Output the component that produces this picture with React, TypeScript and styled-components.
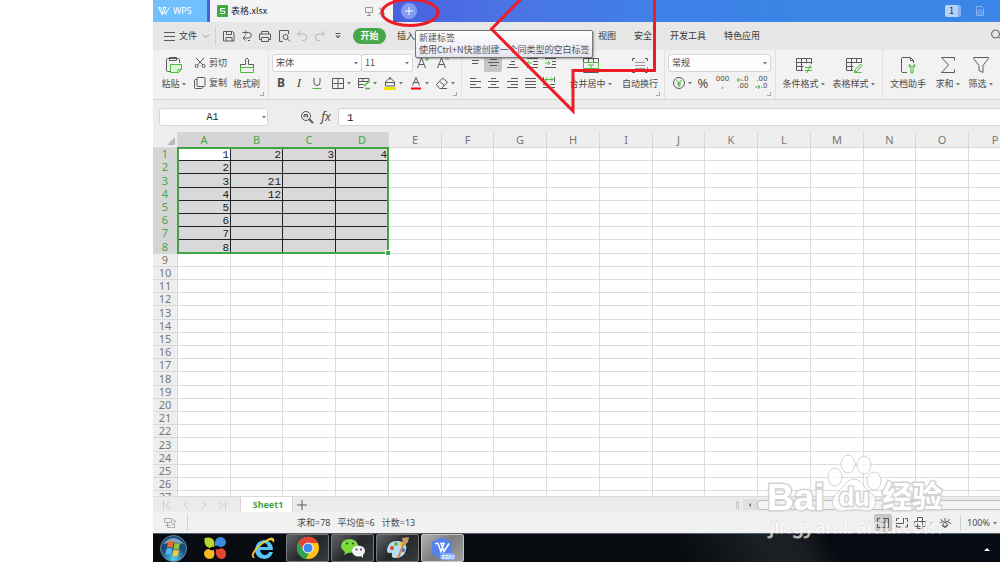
import React from "react";
import styled, { createGlobalStyle } from "styled-components";

const GlobalStyle = createGlobalStyle`
  * { box-sizing: border-box; }
  body { margin: 0; background: #fff; overflow: hidden; }
  button, input, select { font: inherit; color: inherit; margin: 0; }
  svg { flex: none; }
`;

const ui = `"Noto Sans CJK SC", "Noto Sans", sans-serif`;
const mono = `"Liberation Mono", "Noto Sans CJK SC", monospace`;

const Page = styled.div`
  position: relative;
  height: 100vh;
  padding-left: 153px;
  overflow: hidden;
  font: 9px/12px ${ui};
  color: #4c4c4c;
`;
const Desktop = styled.div`
  display: flex;
  flex-direction: column;
  height: 100%;
  min-width: 0;
  background: #f1f1f1;
  overflow: hidden;
`;

/* Title bar */
const TitleBar = styled.header`
  display: flex;
  flex: none;
  align-items: center;
  height: 22px;
  background: linear-gradient(90deg, #4a5fe0 27%, #4a74e4 42%, #3f80e6 60%, #3b85e7 75%);
  color: #fff;
`;
const HomeTab = styled.button`
  display: flex;
  align-items: center;
  gap: 3px;
  width: 54px;
  height: 100%;
  padding: 0 0 0 5px;
  border: 0;
  background: #72bffd;
  color: #fff;
  font: 9px/12px "Noto Sans", sans-serif;
`;
const DocTab = styled.div`
  display: flex;
  align-items: center;
  gap: 3px;
  width: 183px;
  height: 100%;
  margin-left: 3px;
  padding: 0 6px 0 7px;
  background: #f3f3f3;
  color: #223;
`;
const DocName = styled.span`
  flex: 1;
`;
const NewTab = styled.button`
  display: grid;
  place-items: center;
  width: 16px;
  height: 16px;
  margin-left: 8px;
  padding: 0;
  border: 0;
  border-radius: 50%;
  background: #829bf0;
`;
const TitleTools = styled.div`
  display: flex;
  flex: none;
  align-items: center;
  gap: 14px;
  width: 55px;
  margin-left: auto;
  overflow: hidden;
`;
const Count = styled.span`
  flex: none;
  width: 16px;
  border-right: 3px solid #85b2f0;
  border-radius: 2px;
  background: #b7d0f6;
  color: #234;
  text-align: center;
`;

/* Menu */
const MenuBar = styled.nav`
  display: flex;
  flex: none;
  align-items: center;
  height: 28px;
  padding-left: 11px;
  background: #e7e7e7;
  color: #3a3a3a;
`;
const Plain = styled.button<{ $w?: number }>`
  display: flex;
  flex: none;
  align-items: center;
  justify-content: center;
  gap: 4px;
  width: ${(p) => (p.$w ? `${p.$w}px` : "auto")};
  height: 16px;
  padding: 0;
  border: 0;
  background: none;
  white-space: nowrap;
`;
const Rule = styled.span<{ $h: number; $gap?: number }>`
  flex: none;
  width: 1px;
  height: ${(p) => p.$h}px;
  margin-left: ${(p) => p.$gap ?? 0}px;
  background: #cfcfcf;
`;
const QuickTools = styled.div`
  display: flex;
  margin-left: 3px;
`;
const ActiveMenu = styled.button`
  width: 33px;
  height: 16px;
  margin: 0 11px 0 6px;
  padding: 0;
  border: 0;
  border-radius: 8px;
  background: #47a74b;
  color: #fff;
  font-weight: 700;
`;
const MenuItems = styled.div`
  display: flex;
  gap: 18px;
  margin-left: 183px;
`;
const SearchSlot = styled.div`
  width: 10px;
  margin-left: auto;
  overflow: hidden;
`;

/* Ribbon */
const Ribbon = styled.section`
  display: flex;
  flex: none;
  height: 50px;
  border-bottom: 1px solid #d9d9d9;
  background: #f2f2f2;
  overflow: hidden;
`;
const Group = styled.div<{ $w: number }>`
  position: relative;
  display: flex;
  flex: none;
  width: ${(p) => p.$w}px;
  padding: 4px 0 0 3px;
  border-right: 1px solid #e2e2e2;
`;
const Corner = styled.span`
  position: absolute;
  right: 4px;
  bottom: 3px;
  width: 4px;
  height: 4px;
  border: solid #aaa;
  border-width: 0 1px 1px 0;
`;
const Stack = styled.div`
  display: flex;
  flex: none;
  flex-direction: column;
  gap: 2px;
`;
const Line = styled.div`
  display: flex;
  align-items: center;
  height: 18px;
`;
const BigTool = styled.button<{ $w: number }>`
  display: flex;
  flex: none;
  flex-direction: column;
  align-items: center;
  gap: 2px;
  width: ${(p) => p.$w}px;
  height: 38px;
  padding: 2px 0 0;
  border: 0;
  background: none;
  white-space: nowrap;
`;
const BigLabel = styled.span`
  display: flex;
  align-items: center;
  gap: 1px;
  height: 16px;
`;
const Tool = styled.button<{ $w: number; $on?: boolean; $menu?: boolean }>`
  display: flex;
  flex: none;
  align-items: center;
  justify-content: ${(p) => (p.$menu ? "flex-end" : "center")};
  gap: 1px;
  width: ${(p) => p.$w}px;
  height: 18px;
  padding: 0;
  border: 0;
  border-radius: 2px;
  background: ${(p) => (p.$on ? "#c6c6c6" : "none")};
`;
const TextTool = styled(Tool)`
  justify-content: flex-end;
  gap: 3px;
`;
const Picker = styled.label<{ $w: number }>`
  display: flex;
  align-items: center;
  width: ${(p) => p.$w}px;
  height: 18px;
  padding-right: 2px;
  border: 1px solid #d4d4d4;
  border-radius: 3px;
  background: #fdfdfd;
  & + & { margin-left: -1px; }
`;
const Select = styled.select`
  flex: 1;
  min-width: 0;
  height: 16px;
  padding: 0 0 0 3px;
  border: 0;
  background: none;
  appearance: none;
`;

/* Formula bar */
const FormulaBar = styled.section`
  display: flex;
  flex: none;
  align-items: center;
  height: 32px;
  padding: 2px 0 0 6px;
  background: #ededed;
`;
const NameBox = styled.label`
  display: flex;
  align-items: center;
  width: 109px;
  height: 18px;
  margin-right: 29px;
  border: 1px solid #d6d6d6;
  border-radius: 3px;
  background: #fff;
`;
const Field = styled.input<{ $center?: boolean }>`
  flex: 1;
  min-width: 0;
  height: 16px;
  padding: ${(p) => (p.$center ? "1px 4px 0 8px" : "1px 8px 0")};
  border: 0;
  background: none;
  font: ${(p) => (p.$center ? 10 : 11)}px/14px ${mono};
  color: #222;
  text-align: ${(p) => (p.$center ? "center" : "left")};
`;
const FormulaBox = styled.label`
  display: flex;
  flex: 1;
  height: 18px;
  margin-left: 3px;
  border: 1px solid #d6d6d6;
  border-right: 0;
  border-radius: 3px 0 0 3px;
  background: #fff;
`;
const Fx = styled.i`
  width: 18px;
  font: italic 12px/16px "Noto Sans", sans-serif;
  text-align: center;
`;

/* Sheet */
const Sheet = styled.main`
  position: relative;
  flex: 1;
  min-height: 0;
  background: #fff;
  overflow: hidden;
`;
const Grid = styled.table`
  width: 868px;
  border-spacing: 0;
  table-layout: fixed;
  line-height: 12px;
  thead tr { height: 16px; }
  tbody tr { height: 13px; }
  tbody tr:nth-child(5n + 3) { height: 14px; }
`;
const Col = styled.col<{ $w: number }>`
  width: ${(p) => p.$w}px;
`;
const Head = styled.th<{ $on?: boolean }>`
  padding: 0;
  border: solid #d8d8d8;
  border-width: 0 1px 1px 0;
  background: ${(p) => (p.$on ? "#d5d5d5" : "#eeeeee")};
  color: ${(p) => (p.$on ? "#45a74a" : "#777")};
  font: 11px/12px "Noto Sans", sans-serif;
  vertical-align: middle;
`;
const Cell = styled.td<{ $sel?: boolean; $first?: boolean }>`
  padding: 2px 1px 0 0;
  border: solid ${(p) => (p.$sel ? "#222" : "#dcdcdc")};
  border-width: 0 1px 1px 0;
  background: ${(p) => (p.$sel && !p.$first ? "#d9d9d9" : "#fff")};
  color: #222;
  font: 11px/10px ${mono};
  text-align: right;
`;
const Triangle = styled.span`
  display: block;
  width: 0;
  margin: 2px 2px 0 auto;
  border: 4px solid transparent;
  border-right-color: #b9b9b9;
  border-bottom-color: #b9b9b9;
`;
const Selection = styled.div`
  position: absolute;
  top: 15px;
  left: 24px;
  width: 212px;
  height: 107px;
  border: 2px solid #3fa545;
  &::after {
    content: "";
    position: absolute;
    right: -3px;
    bottom: -3px;
    width: 4px;
    height: 4px;
    background: #3fa545;
    box-shadow: 0 0 0 1px #fff;
  }
`;

/* Footer bars */
const TabsBar = styled.div`
  display: flex;
  flex: none;
  align-items: center;
  height: 16px;
  padding-left: 6px;
  border-top: 1px solid #dadada;
  background: #ebebeb;
`;
const SheetTab = styled.button`
  width: 53px;
  height: 16px;
  margin-left: 9px;
  padding: 0 0 0 3px;
  border: solid #d5d5d5;
  border-width: 0 1px;
  background: #fff;
  color: #3fa545;
  font: 700 9px/14px "Noto Sans", sans-serif;
`;
const ScrollArea = styled.div`
  display: flex;
  align-items: center;
  width: 264px;
  height: 15px;
  margin-left: auto;
`;
const Grip = styled.span`
  width: 3px;
  height: 8px;
  margin-right: 4px;
  border: solid #c4c4c4;
  border-width: 0 1px;
`;
const ScrollButton = styled(Plain)`
  height: 11px;
  background: #dfdfdf;
`;
const Thumb = styled.span`
  flex: 1;
  height: 10px;
  border: 1px solid #bdbdbd;
  border-right: 0;
  border-radius: 4px 0 0 4px;
  background: #f4f4f4;
`;
const StatusBar = styled.footer`
  display: flex;
  flex: none;
  align-items: center;
  height: 21px;
  padding-left: 8px;
  background: #f1f1f1;
`;
const Summary = styled.div`
  display: flex;
  gap: 7px;
  margin-left: 109px;
  font: 9px/14px "Noto Sans", ${ui};
`;
const Views = styled.div`
  display: flex;
  align-items: center;
  margin-left: auto;
`;
const Zoom = styled.button`
  display: flex;
  align-items: center;
  gap: 2px;
  width: 39px;
  padding: 0 0 0 6px;
  border: 0;
  background: none;
  font: 9px/14px "Noto Sans", sans-serif;
`;
const Taskbar = styled.nav`
  display: flex;
  flex: none;
  align-items: center;
  height: 29px;
  padding-left: 3px;
  border-top: 1px solid #55606a;
  background: linear-gradient(60deg, #080c11 62%, #1b2025 72%, #1a1e23 76%, #070a10 80%, #070c14);
`;
const Launch = styled.button<{ $w: number }>`
  display: grid;
  place-items: center;
  width: ${(p) => p.$w}px;
  height: 27px;
  padding: 0;
  border: 0;
  background: none;
`;
const Running = styled.button<{ $on?: boolean }>`
  display: grid;
  place-items: center;
  width: 43px;
  height: 28px;
  margin-right: 2px;
  padding: 0;
  border: 1px solid ${(p) => (p.$on ? "#c4c4c4" : "#77797b")};
  border-radius: 2px;
  background: ${(p) =>
    p.$on
      ? "linear-gradient(135deg, #b4b4b4, #7c7c7c 50%, #a2a2a2)"
      : "linear-gradient(135deg, #626568, #25282b 50%, #383b3e)"};
`;
const Tray = styled.button`
  margin: 0 10px 0 auto;
  padding: 0;
  border: 0;
  background: none;
`;

/* Things floating above the window */
const Tooltip = styled.div`
  position: absolute;
  top: 30px;
  left: 415px;
  padding: 1px 3px;
  border: 1px solid #777;
  border-radius: 2px;
  background: linear-gradient(#fff, #e4e5f0);
  box-shadow: 1px 1px 2px #0005;
  color: #555;
  line-height: 12px;
  white-space: nowrap;
`;
const Overlay = styled.svg`
  position: absolute;
  top: 0;
  left: 0;
  pointer-events: none;
`;

type IconProps = { w?: number; h?: number; c?: string; children: React.ReactNode };
const Icon = ({ w = 14, h = 14, c = "#5a5a5a", children }: IconProps) => (
  <svg width={w} height={h} viewBox={`0 0 ${w} ${h}`} fill="none" stroke={c} aria-hidden="true">
    {children}
  </svg>
);
const Caret = () => (
  <Icon w={6} h={4}>
    <path d="M1 1h4L3 3.500z" fill="#777" stroke="none" />
  </Icon>
);
const G = "#4dbb3c";

const lines = (rows: [number, number, number][]) => (
  <Icon>
    {rows.map(([x, y, w]) => (
      <path key={y} d={`M${x} ${y}.5h${w}`} />
    ))}
  </Icon>
);

const icons = {
  save: <Icon><path d="M1.500 2.500h9l1.500 1.500v8h-10.500zM4.500 2.500v3h5v-3M4 12V8.500h6V12" /></Icon>,
  export: <Icon><path d="M2.500 3.500h6a2.500 2.500 0 0 1 0 5.500H3M5.500 6.500 3 9l2.500 2.500M5 1.500 7 3.500l-2 2M8 11.500h2" /></Icon>,
  print: <Icon><path d="M3.500 5V2.500h7V5M3.500 10.500h-2V5h11v5.500h-2M3.500 8.500h7v4h-7z" /></Icon>,
  preview: <Icon><path d="M6 12.500H2.500v-11h9V5" /><circle cx="8.500" cy="8" r="2.500" /><path d="m10.500 10 2.500 2.500" /></Icon>,
  undo: <Icon c="#b4b4b4"><path d="M5 2 2.500 5 5 7.500M3 5h5.500a3 3 0 0 1 0 6.500H7" /></Icon>,
  redo: <Icon c="#b4b4b4"><path d="m9 2 2.500 3L9 7.500M11 5H5.500a3 3 0 0 0 0 6.500H7" /></Icon>,
  more: <Icon w={8} h={8}><path d="M1.500 1.500h5M2 4h4L4 6z" /></Icon>,
  burger: <Icon w={11}><path d="M0 3.500h11M0 7.500h11M0 11.500h11" /></Icon>,
  chevron: <Icon w={8} h={8} c="#999"><path d="m1 2.500 3 3 3-3" /></Icon>,
  paste: (
    <Icon w={18} h={18}>
      <path d="M7 15.500H2.500q-1 0-1-1v-11q0-1 1-1h11q1 0 1 1V7M4.500 1.500h7v3h-7z" />
      <path d="M5.500 8.500h11v5l-3 3h-8zM16 13.500h-3V16" stroke={G} fill="#dff3da" />
    </Icon>
  ),
  cut: <Icon w={12}><path d="m2 2 7 7M10 2 3.500 9" /><circle cx="2.500" cy="10" r="1.500" /><circle cx="9.500" cy="10" r="1.500" /></Icon>,
  copy: <Icon w={12}><path d="M3 3.500H1.500q-1 0-1 1v7q0 1 1 1h6q1 0 1-1V11" /><rect x="3" y="1.500" width="8" height="9" rx="1" /></Icon>,
  brush: (
    <Icon w={18} h={18}>
      <path d="M2.500 11V8.500h5v-5q1.500-3 3 0v5h5V11" />
      <path d="M2.500 11.500h13v5h-13z" stroke={G} />
    </Icon>
  ),
  underline: <Icon><path d="M4 2v4.500a3 3 0 0 0 6 0V2" /><path d="M2.500 12.500h9" stroke={G} /></Icon>,
  border: <Icon><path d="M1.500 2.500h11v10h-11zM7 2.500v10M1.500 7.500h11" /></Icon>,
  cellStyle: <Icon><path d="M12 6.500V2.500H1.500v9h5M1.500 5.500h10M1.500 8.500h5M6 2.500v3" /><path d="m7 10 5-4.500M8 12.500h5" stroke={G} strokeWidth="1.500" /></Icon>,
  fill: <Icon><path d="m2.500 6 4.500-4.500L11.500 6v4h-9zM2.500 6.500h9M7 1v3" /><path d="M1 12.500h12" stroke="#f3e600" strokeWidth="3" /></Icon>,
  color: <Icon><path d="M3.500 9.500 7 1.500l3.500 8M5 6.500h4" /><path d="M2 12.500h10" stroke="#f00" strokeWidth="2" /></Icon>,
  eraser: <Icon><path d="m1.500 8.500 6-6.500 5 4-6 6.500H4.500zM4.500 5.500l5 4M6 12.500h6" /></Icon>,
  grow: <Icon><path d="m1.500 12 4-10 4 10M3 8.500h5" /><path d="M9 3h4M11 1v4" stroke={G} /></Icon>,
  shrink: <Icon><path d="m1.500 12 4-10 4 10M3 8.500h5" /><path d="M9 3h4" stroke={G} /></Icon>,
  top: lines([[2, 1, 11], [4, 4, 7], [4, 7, 6]]),
  middle: lines([[4, 3, 7], [2, 6, 11], [4, 9, 7]]),
  bottom: lines([[6, 5, 4], [4, 8, 6], [2, 11, 11]]),
  left: lines([[2, 2, 6], [2, 5, 11], [2, 8, 6], [2, 11, 11]]),
  center: lines([[5, 2, 5], [2, 5, 11], [5, 8, 5], [2, 11, 11]]),
  right: lines([[6, 2, 7], [2, 5, 11], [6, 8, 7], [2, 11, 11]]),
  justify: lines([[2, 2, 11], [2, 5, 11], [2, 8, 11], [2, 11, 11]]),
  outdent: <Icon><path d="M2 2.500h11M8 5.500h5M8 8.500h5M2 11.500h11" /><path d="M7 7H2m2-2L2 7l2 2" stroke={G} /></Icon>,
  indent: <Icon><path d="M1 2.500h11M8 5.500h4M8 8.500h4M1 11.500h11" /><path d="M1 7h5M4 5l2 2-2 2" stroke={G} /></Icon>,
  spread: <Icon><path d="M1.500 1v5M12.500 1v5M1 8.500h5m2 0h5M1 11.500h5m2 0h5" /><path d="M3 3.500h8M5 1.500l-2 2 2 2M9 1.500l2 2-2 2" stroke={G} /></Icon>,
  merge: <Icon w={18} h={18}><path d="M1.500 6V2.500h15V6M6.500 2.500V6M11.500 2.500V6M1.500 13v3.500h15V13" /><path d="M1.500 6.500h15v6h-15zM6 9h6M9 9v3" stroke={G} /></Icon>,
  wrap: <Icon w={18} h={18}><path d="M4 2.500H1.500V5M14 2.500h2.500V5M1.500 13v3.500H4M14 16.500h2.500" /><path d="M4 6.500h10M4 9.500h10M4 12.500h10" stroke="#999" /><path d="M16.500 11v3" stroke={G} /></Icon>,
  yen: <Icon><circle cx="7" cy="7" r="5.500" /><path d="m4.500 4 2.500 3 2.500-3M7 7v4M5 7h4M5 9h4" stroke={G} /></Icon>,
  cond: <Icon w={18} h={18}><path d="M8 14.500H1.500v-12h15V8M1.500 6.500h15M1.500 10.500h7M6.500 2.500v12M11.500 2.500v4" /><path d="M10 11.500h7M10 14.500h7M15.500 9l-4 8" stroke={G} /></Icon>,
  style: <Icon w={18} h={18}><path d="M8 14.500H1.500v-12h15V7M1.500 6.500h15M1.500 10.500h7M6.500 2.500v12M11.500 2.500v4" /><path d="m10 14 5.500-6 1.500 1.500-5 6H9.500zM9 16.500h7.500" stroke={G} /></Icon>,
  doc: <Icon w={18} h={18}><path d="M8 16.500H3.500q-1 0-1-1v-13q0-1 1-1h8l3 3V7M11.500 1.500v3h3" /><path d="M10.500 8q-1.500 3 1.500 4v5h2v-5q3-1 1.500-4l-1 2.500h-3z" stroke={G} fill="#dff3da" /></Icon>,
  sum: <Icon w={18} h={18}><path d="M15.500 4.500V1.500h-13L9.500 9l-7 7.500h13v-3" /></Icon>,
  filter: <Icon w={18} h={18}><path d="M1.500 1.500h15v1L11 9.500v7l-4-2v-5l-5.500-7z" /></Icon>,
  find: <Icon><circle cx="6" cy="6" r="4.500" /><path d="m9 9 4 4" strokeWidth="2" /><path d="M4 7.500V4.500h3.500M4 6h3.500M7.500 4.500v3" /></Icon>,
  search: <Icon><circle cx="5.500" cy="6" r="4" /><path d="m8.500 9 4 3.500" /></Icon>,
  monitor: <Icon w={10} h={10} c="#999"><path d="M1.500 1.500h7v5h-7zM5 7v2M3 9.500h4" /></Icon>,
  close: <Icon w={10} h={10} c="#777"><path d="m2 1.500 6 7M8 1.500l-6 7" /></Icon>,
  view: <Icon><path d="M1.500 2.500h11v9h-11zM5.500 2.500v9M9 2.500v9M1.500 6.500h11" /></Icon>,
  pageBreak: <Icon><path d="M4 2.500H1.500V5M10 2.500h2.500V11H10M1.500 9v2H6M8.500 2v5.500M1 7.500h8" /></Icon>,
  layout: <Icon><path d="M4.500 1.500h5v4h3v5h-3v2h-5v-2h-3v-5h3zM4.500 5.500v5h5v-5z" /></Icon>,
  eye: <Icon><path d="M1 8q6-6 12 0M4 9q3 5 6 0M7 2v2M2.500 3 4 5M11.500 3 10 5" /><circle cx="7" cy="8.500" r="2" /></Icon>,
  device: <Icon c="#aaa"><path d="M1.500 2.500h7v4h-7zM4.500 6.500v5H8M2 9.500h5M10 4h2v3h-2M8.500 8.500h3v3h-3" /></Icon>,
  arrowLeft: <Icon w={6} h={6} c={G}><path d="M6 3H1M3 1 1 3l2 2" /></Icon>,
  arrowRight: <Icon w={6} h={6} c={G}><path d="M0 3h5M3 1l2 2-2 2" /></Icon>,
};

const Big = ({ w, icon, text, menu }: { w: number; icon: React.ReactNode; text: string; menu?: boolean }) => (
  <BigTool $w={w}>
    {icon}
    <BigLabel>
      {text}
      {menu && <Caret />}
    </BigLabel>
  </BigTool>
);
const Small = ({ w = 18, icon, menu, on, name }: { w?: number; icon: React.ReactNode; menu?: boolean; on?: boolean; name: string }) => (
  <Tool $w={w} $menu={menu} $on={on} aria-label={name}>
    {icon}
    {menu && <Caret />}
  </Tool>
);

const Glyph = styled.span<{ $italic?: boolean }>`
  font: ${(p) => (p.$italic ? "italic 400 13px" : "700 12px")}/16px ${(p) => (p.$italic ? '"Liberation Serif", serif' : '"Noto Sans", sans-serif')};
`;
const Percent = styled.span`
  font: 13px/16px "Noto Sans", sans-serif;
`;
const Digits = styled.span`
  display: flex;
  flex-direction: column;
  font: 7px/7px "DejaVu Sans", sans-serif;
  text-align: center;
`;
const DigitRow = styled.span`
  display: flex;
  align-items: center;
  justify-content: flex-end;
`;
const Comma = styled.b`
  color: ${G};
`;

const columns = "ABCDEFGHIJKLMNOP".split("");
const values: Record<string, number> = {
  A1: 1, B1: 2, C1: 3, D1: 4, A2: 2, A3: 3, B3: 21, A4: 4, B4: 12, A5: 5, A6: 6, A7: 7, A8: 8,
};

const SheetGrid = () => (
  <Grid>
    <colgroup>
      <Col $w={25} />
      {columns.map((c, i) => (
        <Col key={c} $w={i % 4 === 1 ? 52 : 53} />
      ))}
    </colgroup>
    <thead>
      <tr>
        <Head><Triangle /></Head>
        {columns.map((c, i) => (
          <Head key={c} $on={i < 4} scope="col">{c}</Head>
        ))}
      </tr>
    </thead>
    <tbody>
      {Array.from({ length: 27 }, (_, r) => (
        <tr key={r}>
          <Head $on={r < 8} scope="row">{r + 1}</Head>
          {columns.map((c, i) => (
            <Cell key={c} $sel={r < 8 && i < 4} $first={r === 0 && i === 0}>{values[`${c}${r + 1}`]}</Cell>
          ))}
        </tr>
      ))}
    </tbody>
  </Grid>
);

const App = () => (
  <Page>
    <GlobalStyle />
    <Desktop>
      <TitleBar>
        <HomeTab>
          <Icon w={12} h={10} c="#fff"><path d="M.5 1.500h2L5 8l3-6.500H5L7.500 8l4-6.500M.5 1.500 4 8.500h1M7.500 8.500 8 7" /></Icon>
          WPS
        </HomeTab>
        <DocTab>
          <Icon w={11} h={12} c="#fff"><rect width="11" height="12" rx="1" fill="#3ea945" stroke="none" /><path d="M8 3.500H3.500V6H7.500v2.500H3" /></Icon>
          <DocName>表格.xlsx</DocName>
          {icons.monitor}
          <Plain aria-label="关闭">{icons.close}</Plain>
        </DocTab>
        <NewTab aria-label="新建标签">
          <Icon w={10} h={10} c="#fff"><path d="M5 1v8M1 5h8" /></Icon>
        </NewTab>
        <TitleTools>
          <Count>1</Count>
          <Icon w={10} h={12} c="#86b4f1"><path d="M1.500 1.500h5l2 2v7h-7zM3 9V6l2-2 2 2v3zM5 6v2" /></Icon>
          <Icon w={12} h={12} c="#86b4f1"><path d="m4 1.500-3 2 1 2h1.500v5h6v-5L11 3.500l-3-2Q6 4 4 1.500z" /></Icon>
        </TitleTools>
      </TitleBar>

      <MenuBar>
        <Plain>{icons.burger}文件</Plain>
        <Plain $w={18} aria-label="展开">{icons.chevron}</Plain>
        <Rule $h={18} />
        <QuickTools>
          <Plain $w={19} aria-label="保存">{icons.save}</Plain>
          <Plain $w={18} aria-label="输出">{icons.export}</Plain>
          <Plain $w={18} aria-label="打印">{icons.print}</Plain>
          <Plain $w={19} aria-label="预览">{icons.preview}</Plain>
          <Plain $w={18} aria-label="撤销">{icons.undo}</Plain>
          <Plain $w={18} aria-label="恢复">{icons.redo}</Plain>
          <Plain $w={18} aria-label="更多">{icons.more}</Plain>
        </QuickTools>
        <ActiveMenu>开始</ActiveMenu>
        <Plain>插入</Plain>
        <MenuItems>
          <Plain>视图</Plain>
          <Plain>安全</Plain>
          <Plain>开发工具</Plain>
          <Plain>特色应用</Plain>
        </MenuItems>
        <SearchSlot>{icons.search}</SearchSlot>
      </MenuBar>

      <Ribbon>
        <Group $w={116}>
          <Big w={36} icon={icons.paste} text="粘贴" menu />
          <Stack>
            <TextTool $w={35}>{icons.cut}剪切</TextTool>
            <TextTool $w={35}>{icons.copy}复制</TextTool>
          </Stack>
          <Big w={39} icon={icons.brush} text="格式刷" />
          <Corner />
        </Group>
        <Group $w={193}>
          <Stack>
            <Line>
              <Picker $w={90}><Select aria-label="字体"><option>宋体</option></Select><Caret /></Picker>
              <Picker $w={52}><Select aria-label="字号"><option>11</option></Select><Caret /></Picker>
              <Small icon={icons.grow} name="增大字号" w={20} />
              <Small icon={icons.shrink} name="减小字号" w={20} />
            </Line>
            <Line>
              <Tool $w={18}><Glyph>B</Glyph></Tool>
              <Tool $w={18}><Glyph $italic>I</Glyph></Tool>
              <Small icon={icons.underline} name="下划线" />
              <Small w={26} icon={icons.border} name="边框" menu />
              <Small w={26} icon={icons.cellStyle} name="单元格样式" menu />
              <Small w={26} icon={icons.fill} name="填充" menu />
              <Small w={26} icon={icons.color} name="字体颜色" menu />
              <Small w={26} icon={icons.eraser} name="清除" menu />
            </Line>
          </Stack>
          <Corner />
        </Group>
        <Group $w={203}>
          <Stack>
            <Line>
              <Small w={19} icon={icons.top} name="顶端对齐" />
              <Small w={18} icon={icons.middle} name="垂直居中" on />
              <Small w={20} icon={icons.bottom} name="底端对齐" />
              <Small w={19} icon={icons.outdent} name="减少缩进" />
              <Small w={19} icon={icons.indent} name="增加缩进" />
            </Line>
            <Line>
              <Small w={19} icon={icons.left} name="左对齐" />
              <Small w={18} icon={icons.center} name="居中" />
              <Small w={19} icon={icons.right} name="右对齐" />
              <Small w={18} icon={icons.justify} name="两端对齐" />
              <Small w={19} icon={icons.spread} name="分散对齐" />
            </Line>
          </Stack>
          <Big w={62} icon={icons.merge} text="合并居中" menu />
          <Big w={36} icon={icons.wrap} text="自动换行" />
          <Corner />
        </Group>
        <Group $w={111}>
          <Stack>
            <Line>
              <Picker $w={103}><Select aria-label="数字格式"><option>常规</option></Select><Caret /></Picker>
            </Line>
            <Line>
              <Small w={25} icon={icons.yen} name="货币" menu />
              <Tool $w={20}><Percent>%</Percent></Tool>
              <Tool $w={19}><Digits><span>000</span><Comma>,</Comma></Digits></Tool>
              <Tool $w={20}><Digits><DigitRow>{icons.arrowLeft}.0</DigitRow><DigitRow>.00</DigitRow></Digits></Tool>
              <Tool $w={18}><Digits><DigitRow>.00</DigitRow><DigitRow>{icons.arrowRight}.0</DigitRow></Digits></Tool>
            </Line>
          </Stack>
          <Corner />
        </Group>
        <Group $w={107}>
          <Big w={50} icon={icons.cond} text="条件格式" menu />
          <Big w={50} icon={icons.style} text="表格样式" menu />
        </Group>
        <Group $w={118}>
          <Big w={44} icon={icons.doc} text="文档助手" />
          <Big w={36} icon={icons.sum} text="求和" menu />
          <Big w={30} icon={icons.filter} text="筛选" menu />
        </Group>
      </Ribbon>

      <FormulaBar>
        <NameBox>
          <Field $center aria-label="名称框" defaultValue="A1" />
          <Caret />
        </NameBox>
        <Plain $w={20} aria-label="查找">{icons.find}</Plain>
        <Fx>fx</Fx>
        <FormulaBox><Field aria-label="编辑栏" defaultValue="1" /></FormulaBox>
      </FormulaBar>

      <Sheet>
        <SheetGrid />
        <Selection />
      </Sheet>

      <TabsBar>
        {["M2.500 3v8M9 3 5 7l4 4", "M9 3 5 7l4 4", "m5 3 4 4-4 4", "m4 3 4 4-4 4M10.500 3v8"].map((d) => (
          <Plain key={d} $w={18} aria-label="切换工作表"><Icon c="#ccc"><path d={d} /></Icon></Plain>
        ))}
        <SheetTab>Sheet1</SheetTab>
        <Plain $w={18} aria-label="新建工作表"><Icon><path d="M7 2v10M2 7h10" /></Icon></Plain>
        <ScrollArea>
          <Grip />
          <ScrollButton $w={14} aria-label="向左滚动"><Icon w={6} h={6}><path d="M4 1v4L2 3z" fill="#666" stroke="none" /></Icon></ScrollButton>
          <Thumb />
        </ScrollArea>
      </TabsBar>
      <StatusBar>
        <Plain $w={18} aria-label="设备">{icons.device}</Plain>
        <Rule $h={16} $gap={8} />
        <Summary>
          <span>求和=78</span>
          <span>平均值=6</span>
          <span>计数=13</span>
        </Summary>
        <Views>
          <Small w={18} icon={icons.view} name="普通视图" on />
          <Small w={20} icon={icons.pageBreak} name="分页预览" />
          <Small w={22} icon={icons.layout} name="页面布局" menu />
          <Small w={22} icon={icons.eye} name="护眼模式" />
          <Rule $h={16} $gap={4} />
          <Zoom>100%<Caret /></Zoom>
        </Views>
      </StatusBar>

      <Taskbar>
        <Launch $w={34} aria-label="开始菜单">
          <Icon w={27} h={27} c="none">
            <defs><radialGradient id="orb" cy=".9"><stop stopColor="#4fd0f5" /><stop offset="1" stopColor="#1b4c7c" /></radialGradient></defs>
            <circle cx="13.500" cy="13.500" r="13" fill="url(#orb)" stroke="#68879c" />
            <path d="M3 9q10-12 21 0Q14 6 3 9z" fill="#a9c6dc" opacity=".7" />
            <path d="M8 7q3-2 5.500 0l-1 6q-3-2-5.500 0z" fill="#ee6a2b" />
            <path d="M14.500 7.500q3 2 5.500 0l-1 6q-3 2-5.500 0z" fill="#8bc541" />
            <path d="M6.500 14q3-2 5.500 0l-1 6q-3-2-5.500 0z" fill="#55b5ee" />
            <path d="M13.500 14.500q3 2 5.500 0l-1 6q-3 2-5.500 0z" fill="#fdc92f" />
          </Icon>
        </Launch>
        <Launch $w={49} aria-label="应用">
          <Icon w={24} h={24} c="none">
            <path d="M1.500 2Q9 0 11 5q1 3 0 6-2-1-4 1-5-1-5.500-6z" fill="#b7d52b" />
            <path d="M12 10q-1-9 6-9 5 1 5 6-1 4-6 4-3-2-5-1z" fill="#3c88dc" />
            <path d="M13 13q3 1 5-1 5 1 5 6 0 5-5 5-6-1-5-10z" fill="#e3452f" />
            <path d="M11 14q2 9-5 9-5-1-5-6 1-4 5-4 2 2 5 1z" fill="#f3b921" />
          </Icon>
        </Launch>
        <Launch $w={47} aria-label="浏览器">
          <Icon w={26} h={24} c="none">
            <path d="M23 16q-2 7-9 7-9-1-9-10 1-8 9-9 9 1 9 10H10q1 5 5 5 3 0 4-3zM10 11h8q-1-4-4-4t-4 4z" fill="#57c5f5" />
            <path d="M3 22q-4-4 6-13 13-11 15-6 1 2-1 4 0-4-5-2Q8 10 4 18q-1 3 1 4z" fill="#f6c52c" />
          </Icon>
        </Launch>
        <Running aria-label="Chrome">
          <Icon w={24} h={24} c="none">
            <circle cx="12" cy="12" r="11" fill="#fbc116" />
            <path d="M2.500 6.500A11 11 0 0 1 22 7H12L9 16z" fill="#e04436" />
            <path d="M2.500 6.500 8 15l5 2-3 6Q1 21 1 12q0-3 1.500-5.500z" fill="#2fa150" />
            <circle cx="12" cy="12" r="5" fill="#4285f4" stroke="#fff" />
          </Icon>
        </Running>
        <Running aria-label="微信">
          <Icon w={26} h={22} c="none">
            <path d="m4 18 1-3q-4-3-4-6 1-7 9-7 7 1 8 6 0 8-10 8z" fill="#7bdb3c" />
            <ellipse cx="18.500" cy="14" rx="6.500" ry="5.500" fill="#f2f2f2" /><path d="m20 18 3 3v-5z" fill="#f2f2f2" />
            <g fill="#335"><circle cx="7" cy="6.500" r="1" /><circle cx="13" cy="6.500" r="1" /><circle cx="16.500" cy="12.500" r="1" /><circle cx="21" cy="12.500" r="1" /></g>
          </Icon>
        </Running>
        <Running aria-label="画图">
          <Icon w={26} h={24} c="none">
            <path d="M2 14Q3 4 14 5q9 2 7 9-2 8-11 8-4 0-3-4 0-2-3-1-2 0-2-3z" fill="#b5dcef" />
            <circle cx="7" cy="12" r="2" fill="#e04630" /><circle cx="11" cy="8" r="2" fill="#62b93c" /><circle cx="16" cy="8" r="2" fill="#f3bf28" /><circle cx="18" cy="14" r="2" fill="#3c79d0" />
            <path d="m13 22 6-15" stroke="#d98235" strokeWidth="2" /><path d="m18 8-1-6 7-1-1 5-3 3z" fill="#c59768" />
          </Icon>
        </Running>
        <Running $on aria-label="WPS">
          <Icon w={26} h={25} c="#fff">
            <path d="m12 1 10 5v12l-10 6-10-6V6z" fill="#5583ea" stroke="none" />
            <path d="M5 7.500h3l3 8 3-8h-3l3 8 5-8" strokeWidth="1.500" />
            <rect x="10" y="17" width="15" height="7" rx="3" fill="#84a9f5" stroke="none" />
            <text x="18" y="23" fontSize="6" fontWeight="700" fontFamily="Liberation Sans, sans-serif" textAnchor="middle" fill="#fff" stroke="none">EDU</text>
          </Icon>
        </Running>
        <Tray aria-label="显示隐藏的图标"><Icon w={6} h={4} c="none"><path d="m0 4 3-3 3 3z" fill="#fff" /></Icon></Tray>
      </Taskbar>
    </Desktop>

    <Tooltip role="tooltip">
      新建标签
      <br />
      使用Ctrl+N快速创建一个同类型的空白标签
    </Tooltip>

    <Overlay width="1000" height="562" viewBox="0 0 1000 562" fill="none" aria-hidden="true">
      <g stroke="#d2d2d2" fill="#fff" fillOpacity=".8">
        <ellipse cx="835" cy="477" rx="7" ry="9" />
        <ellipse cx="848" cy="464" rx="7" ry="9" />
        <ellipse cx="864" cy="465" rx="7" ry="9" />
        <ellipse cx="874" cy="481" rx="7" ry="9" />
        <path d="M854 479c8 0 11 11 18 15 7 5 4 18-7 17-8-2-15-1-21 0-10 2-16-9-8-17 7-5 10-15 18-15z" />
        <g fontFamily='"Liberation Sans", "Noto Sans CJK SC", sans-serif' fontWeight="700" paintOrder="stroke" strokeWidth="3" fillOpacity="1">
          <text x="767" y="510" fontSize="37">Bai</text>
          <text x="839" y="506" fontSize="25">du</text>
          <text x="882" y="507" fontSize="30">经验</text>
        </g>
        <text x="769" y="533" fontSize="20" fontFamily='"Noto Sans", sans-serif' paintOrder="stroke" strokeWidth="1" opacity=".7" fillOpacity="1">jingyan.baidu.com</text>
      </g>
      <g stroke="#ee1c25" strokeWidth="3">
        <ellipse cx="410" cy="12.500" rx="28" ry="13" />
        <path d="M521-1 491.500 29l81.500 82V70.500h81.500V-1" />
      </g>
    </Overlay>
  </Page>
);

export default App;
